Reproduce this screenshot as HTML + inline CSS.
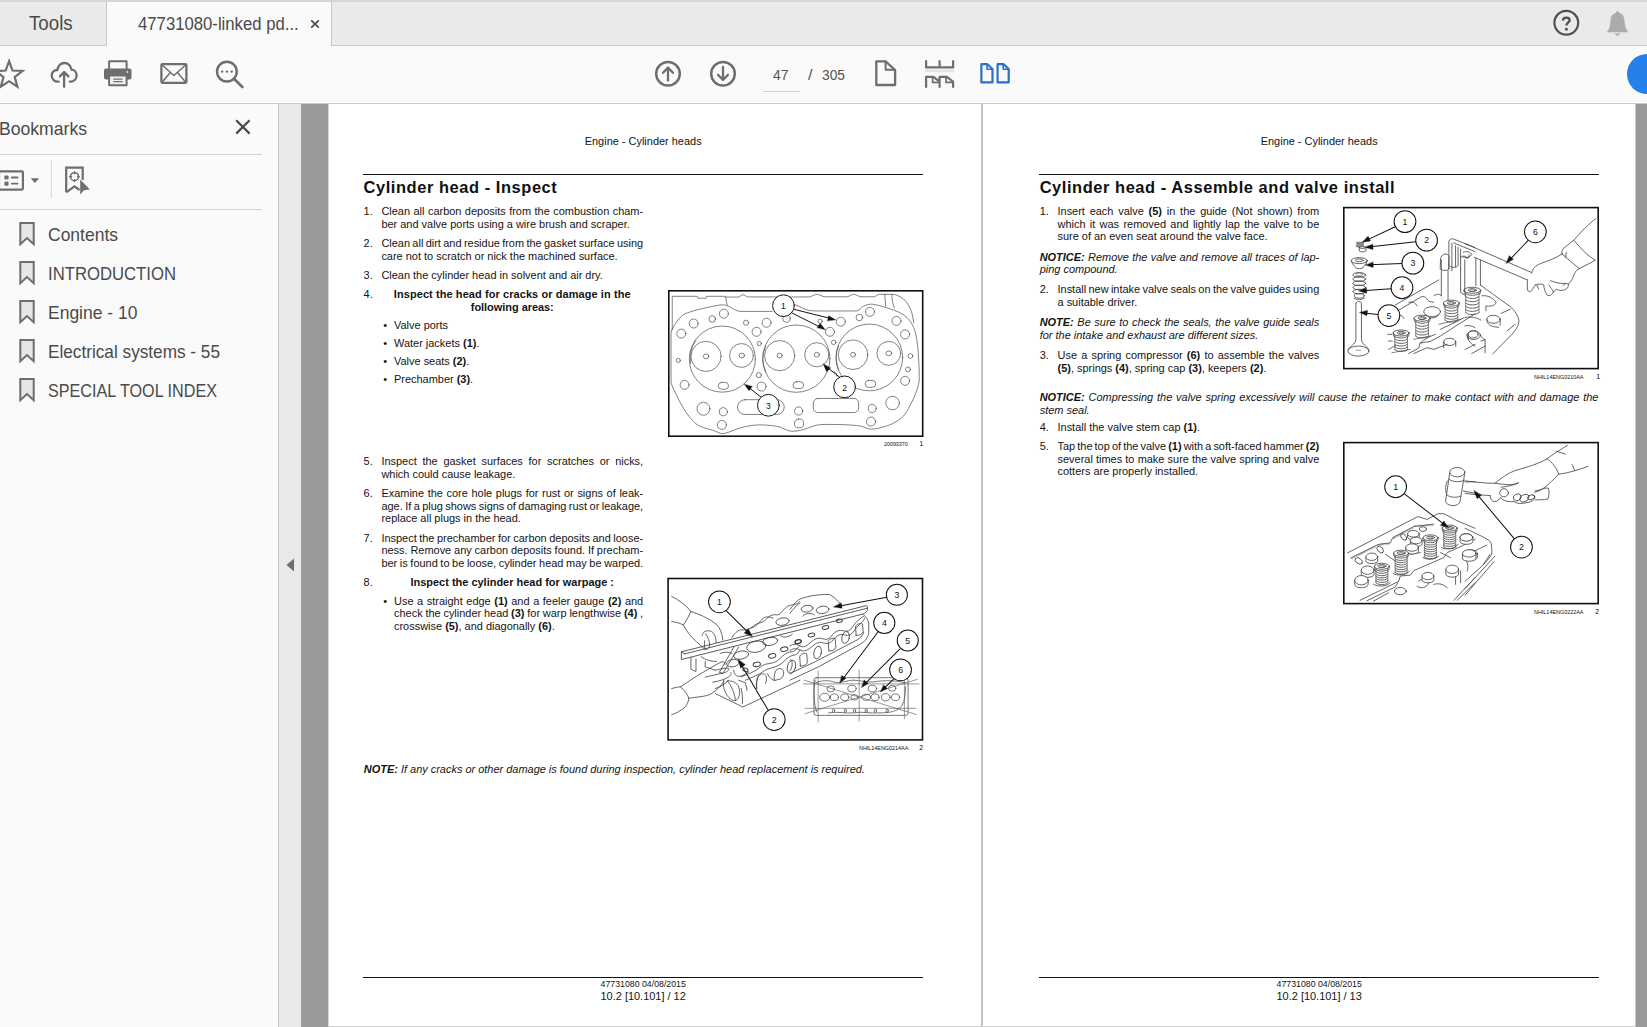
<!DOCTYPE html>
<html>
<head>
<meta charset="utf-8">
<title>47731080-linked pdf</title>
<style>
*{box-sizing:border-box;margin:0;padding:0}
html,body{width:1647px;height:1027px;overflow:hidden;background:#fafafa;font-family:"Liberation Sans",sans-serif;}
.abs{position:absolute}
#tabbar{position:absolute;left:0;top:0;width:1647px;height:46px;background:#eaeaea;border-top:2px solid #d6d6d6;border-bottom:1px solid #c8c8c8}
#tab1{position:absolute;left:0;top:0;width:107px;height:43px;border-right:1px solid #c8c8c8}
#tab2{position:absolute;left:107px;top:0;width:225px;height:44px;background:#fafafa;border-right:1px solid #c8c8c8}
.ui{position:absolute;color:#4a4a4a;white-space:nowrap;transform-origin:0 0}
#toolbar{position:absolute;left:0;top:46px;width:1647px;height:58px;background:#fafafa;border-bottom:1px solid #cbcbcb}
#left{position:absolute;left:0;top:104px;width:279px;height:923px;background:#fafafa;border-right:1px solid #c6c6c6}
#strip{position:absolute;left:279px;top:104px;width:22px;height:923px;background:#e9e9e9}
#dark{position:absolute;left:301px;top:104px;width:1346px;height:923px;background:#999999}
#pg1{position:absolute;left:328px;top:104px;width:653px;height:922px;background:#fff;border-left:1px solid #d4d4d4}
#div{position:absolute;left:981px;top:104px;width:2px;height:923px;background:#c3c3c3}
#pg2{position:absolute;left:983px;top:104px;width:653px;height:922px;background:#fff;border-right:1px solid #c6c6c6}
#bot{position:absolute;left:328px;top:1026px;width:1308px;height:1px;background:#cfcfcf}
.t{position:absolute;white-space:nowrap;font-size:10.96px;line-height:13px;color:#141414;height:13px}
.b{font-weight:bold}
.i{font-style:italic}
.h{position:absolute;white-space:nowrap;font-weight:bold;font-size:16.44px;line-height:20px;letter-spacing:.56px;color:#111}
.rule{position:absolute;height:1px;background:#111}
.fig{position:absolute;border:1.6px solid #111;background:#fff;overflow:hidden}
.fig svg{position:absolute;left:-1.6px;top:-1.6px}
.cap{position:absolute;color:#111;white-space:nowrap;line-height:8px}
</style>
</head>
<body>
<div id="tabbar">
  <div id="tab1"></div>
  <div id="tab2"></div>
</div>
<div id="toolbar"></div>
<div id="left"></div>
<div id="strip"></div>
<div id="dark"></div>
<div id="pg1"></div>
<div id="div"></div>
<div id="pg2"></div>
<div id="bot"></div>
<div class="ui" style="left:28.80px;top:10.64px;font-size:19.5px;line-height:25px;color:#4a4a4a;transform:scaleX(0.9600);">Tools</div>
<div class="ui" style="left:137.80px;top:11.69px;font-size:18.5px;line-height:24px;color:#4a4a4a;transform:scaleX(0.9031);">47731080-linked pd...</div>
<svg class="abs" style="left:309px;top:17.5px" width="12" height="12" viewBox="0 0 12 12"><path d="M2.2 2.4L9.8 9.6M9.8 2.4L2.2 9.6" stroke="#4a4a4a" stroke-width="1.7" fill="none"/></svg>
<svg class="abs" style="left:0;top:46px" width="1647" height="57" viewBox="0 46 1647 57" fill="none" stroke="#6e6e6e" stroke-width="2.3" stroke-linejoin="round" stroke-linecap="round">
<!-- star -->
<path stroke-linejoin="miter" stroke-width="2.2" d="M9.1 61.2L12.55 70.55L22.5 70.95L14.7 77.1L17.4 86.7L9.1 81.2L0.8 86.7L3.5 77.1L-4.3 70.95L5.65 70.55Z"/>
<!-- cloud upload -->
<path d="M58.6 81.6C54.6 81.9 51.7 79.2 51.7 75.6C51.7 72.2 54.4 69.8 57.4 70C58 65.8 60.9 63 64.4 63C67.9 63 70.8 65.6 71.5 69.6C74.6 69.7 76.6 72.3 76.6 75.5C76.6 79 73.8 81.9 69.8 81.6"/>
<path d="M64.1 86.8V72.2M59.9 76.4L64.1 72.1L68.4 76.4"/>
<!-- printer -->
<path stroke-width="2" d="M109.1 68.6V61.3H126.6V68.6"/>
<rect x="104" y="68.4" width="27.5" height="11" rx="2" fill="#6e6e6e" stroke="none"/>
<rect x="109.1" y="75.4" width="17.5" height="9.9" fill="#f0f0f0" stroke-width="2"/>
<path stroke-width="1.2" stroke-linecap="butt" d="M113.3 79.2H122.6M113.3 81.7H122.6"/>
<circle cx="127.3" cy="72" r="0.9" fill="#e0e0e0" stroke="none"/>
<!-- mail -->
<rect x="161.4" y="64.2" width="25" height="18.6" rx="1" stroke-width="2.3"/>
<path stroke-width="1.5" d="M162.5 65.3L173.9 75.5L185.3 65.3M162.5 81.8L170.3 72.5M185.3 81.8L177.5 72.5"/>
<!-- search -->
<circle cx="226.9" cy="71.6" r="9.9" stroke-width="2.4"/>
<path stroke-width="2.6" d="M234.2 79L242.4 87"/>
<circle cx="222.1" cy="71.6" r="1.2" fill="#6e6e6e" stroke="none"/><circle cx="226.9" cy="71.6" r="1.2" fill="#6e6e6e" stroke="none"/><circle cx="231.7" cy="71.6" r="1.2" fill="#6e6e6e" stroke="none"/>
<!-- up / down -->
<circle cx="668" cy="73.8" r="11.8" stroke-width="2.5"/>
<path stroke-width="2.3" d="M668 80.6V67.8M663 72.8L668 67.6L673 72.8"/>
<circle cx="723" cy="73.8" r="11.8" stroke-width="2.5"/>
<path stroke-width="2.3" d="M723 67V79.8M718 74.8L723 80L728 74.8"/>
<!-- page -->
<path stroke-width="2.3" d="M876.3 61.4H885.6L895.1 70V85H876.3Z"/>
<path stroke-width="2" d="M885.6 61.6V69.8H894.8"/>
<!-- fit -->
<g stroke-width="2.2" stroke-linecap="butt" stroke-linejoin="round">
<rect x="925" y="69.6" width="29.2" height="2.6" fill="#e4e4e4" stroke="none"/>
<path d="M926.1 60.3V67.4H939.6V60.3M939.6 67.4H953.1V60.3"/>
<path d="M926.1 87.8V76.8H933.4L939.6 81.6V87.8M939.6 81.6V76.8H946.9L953.1 81.6V87.8"/>
<path stroke-width="1.7" d="M932.6 77V82.4H939.2M946.1 77V82.4H952.7"/>
</g>
<!-- two page -->
<g stroke="#2a6fc9" stroke-width="2.2">
<path d="M981.4 64.2H987.4L992.5 69V82.4H981.4Z"/><path stroke-width="1.6" d="M987 64.4V69.3H992.2"/>
<path d="M997.6 64.2H1003.6L1008.7 69V82.4H997.6Z"/><path stroke-width="1.6" d="M1003.2 64.4V69.3H1008.4"/>
</g>
</svg>
<!-- blue circle -->
<div class="abs" style="left:1627px;top:54px;width:40px;height:40px;border-radius:20px;background:#2680eb"></div>
<!-- help + bell -->
<svg class="abs" style="left:1540px;top:2px" width="107" height="42" viewBox="1540 2 107 42">
<circle cx="1566.3" cy="22.8" r="11.9" fill="none" stroke="#505050" stroke-width="2.2"/>
<path d="M1562.9 20.6C1563 18.6 1564.4 17.6 1566.3 17.6C1568.3 17.6 1569.7 18.7 1569.7 20.3C1569.7 22.4 1566.4 22.7 1566.4 25.6" fill="none" stroke="#505050" stroke-width="2.3"/>
<circle cx="1566.4" cy="29.2" r="1.45" fill="#505050"/>
<path d="M1617.5 11.2C1618.6 11.2 1619.3 12 1619.2 13C1622.8 13.9 1624.3 17 1624.5 20.5C1624.8 25.6 1625.6 29.2 1628.2 32.2H1606.8C1609.4 29.2 1610.2 25.6 1610.5 20.5C1610.7 17 1612.2 13.9 1615.8 13C1615.7 12 1616.4 11.2 1617.5 11.2Z" fill="#ababab"/>
<path d="M1614.3 33.6H1620.7L1617.5 36.2Z" fill="#ababab"/>
</svg>
<!-- bookmark pane tools -->
<svg class="abs" style="left:0;top:158px" width="100" height="44" viewBox="0 158 100 44" fill="none" stroke="#6e6e6e" stroke-width="2.2" stroke-linejoin="round">
<rect x="-1" y="171.3" width="23.9" height="18.3" rx="1"/>
<rect x="4.4" y="175.4" width="4.2" height="4.2" rx="1" fill="#6e6e6e" stroke="none"/><rect x="4.4" y="181.6" width="4.2" height="4.2" rx="1" fill="#6e6e6e" stroke="none"/>
<path stroke-width="1.8" stroke-linecap="round" d="M11.8 177.5H17.6M11.8 183.7H17.6"/>
<path d="M30.7 178.2H39.1L34.9 182.9Z" fill="#6e6e6e" stroke="none"/>
<path d="M51.3 160.5V198" stroke="#d4d4d4" stroke-width="1"/>
<path stroke-linejoin="miter" d="M66.2 192V167.6H82.7V180"/>
<path stroke-linejoin="miter" d="M66.2 192.3L74.5 186.3L79.6 190"/>
<circle cx="74.5" cy="176.7" r="4" stroke-width="1.5"/>
<path stroke-width="1.2" d="M74.5 171.3V174.3M74.5 179.1V182.1M69.1 176.7H72.1M76.9 176.7H79.9"/>
<path d="M80.2 179.5L89.9 189.4L84 190.2L80.2 194.6Z" fill="#6e6e6e" stroke="none"/>
</svg>

<div class="ui" style="left:773.00px;top:64.63px;font-size:15.5px;line-height:20px;color:#555;transform:scaleX(0.8932);">47</div>
<div class="ui" style="left:807.50px;top:64.63px;font-size:15.5px;line-height:20px;color:#555;transform:scaleX(1.0450);">/</div>
<div class="ui" style="left:821.50px;top:64.63px;font-size:15.5px;line-height:20px;color:#555;transform:scaleX(0.8894);">305</div>
<div class="abs" style="left:763px;top:91px;width:37px;height:1px;background:#d0d0d0"></div>
<div class="ui" style="left:-1.00px;top:116.79px;font-size:18.5px;line-height:24px;color:#4a4a4a;transform:scaleX(0.9511);">Bookmarks</div>
<svg class="abs" style="left:233px;top:117px" width="20" height="20" viewBox="0 0 20 20"><path d="M3.2 3.2L16.6 16.6M16.6 3.2L3.2 16.6" stroke="#4a4a4a" stroke-width="2.2" fill="none"/></svg>
<div class="abs" style="left:0;top:154px;width:262px;height:1px;background:#d3d3d3"></div>
<div class="abs" style="left:0;top:209px;width:262px;height:1px;background:#d3d3d3"></div>
<div class="ui" style="left:48.30px;top:222.79px;font-size:18.5px;line-height:24px;color:#4a4a4a;transform:scaleX(0.9454);">Contents</div>
<svg class="abs" style="left:18px;top:220.7px" width="18" height="26" viewBox="0 0 18 26"><path d="M2.3 2h13.4v21.3l-6.7-6.2-6.7 6.2z" fill="#e6e6e6" stroke="#6e6e6e" stroke-width="2" stroke-linejoin="miter"/></svg>
<div class="ui" style="left:48.30px;top:262.19px;font-size:18.5px;line-height:24px;color:#4a4a4a;transform:scaleX(0.9025);">INTRODUCTION</div>
<svg class="abs" style="left:18px;top:260.1px" width="18" height="26" viewBox="0 0 18 26"><path d="M2.3 2h13.4v21.3l-6.7-6.2-6.7 6.2z" fill="#e6e6e6" stroke="#6e6e6e" stroke-width="2" stroke-linejoin="miter"/></svg>
<div class="ui" style="left:48.30px;top:301.29px;font-size:18.5px;line-height:24px;color:#4a4a4a;transform:scaleX(0.9448);">Engine - 10</div>
<svg class="abs" style="left:18px;top:299.2px" width="18" height="26" viewBox="0 0 18 26"><path d="M2.3 2h13.4v21.3l-6.7-6.2-6.7 6.2z" fill="#e6e6e6" stroke="#6e6e6e" stroke-width="2" stroke-linejoin="miter"/></svg>
<div class="ui" style="left:48.30px;top:340.29px;font-size:18.5px;line-height:24px;color:#4a4a4a;transform:scaleX(0.9295);">Electrical systems - 55</div>
<svg class="abs" style="left:18px;top:338.2px" width="18" height="26" viewBox="0 0 18 26"><path d="M2.3 2h13.4v21.3l-6.7-6.2-6.7 6.2z" fill="#e6e6e6" stroke="#6e6e6e" stroke-width="2" stroke-linejoin="miter"/></svg>
<div class="ui" style="left:48.30px;top:378.59px;font-size:18.5px;line-height:24px;color:#4a4a4a;transform:scaleX(0.8743);">SPECIAL TOOL INDEX</div>
<svg class="abs" style="left:18px;top:376.5px" width="18" height="26" viewBox="0 0 18 26"><path d="M2.3 2h13.4v21.3l-6.7-6.2-6.7 6.2z" fill="#e6e6e6" stroke="#6e6e6e" stroke-width="2" stroke-linejoin="miter"/></svg>
<svg class="abs" style="left:285px;top:557px" width="12" height="16" viewBox="0 0 12 16"><path d="M1.5 8L9 1.5V14.5z" fill="#6e6e6e"/></svg>
<div class="t" style="left:584.71px;top:135.00px;">Engine - Cylinder heads</div>
<div class="rule" style="left:363px;top:174px;width:560px"></div>
<div class="h" style="left:363.6px;top:176.70px">Cylinder head - Inspect</div>
<div class="t" style="left:363.60px;top:205.00px;">1.</div>
<div class="t" style="left:381.40px;top:205.00px;word-spacing:0.428px;">Clean all carbon deposits from the combustion cham-</div>
<div class="t" style="left:381.40px;top:218.00px;">ber and valve ports using a wire brush and scraper.</div>
<div class="t" style="left:363.60px;top:237.00px;">2.</div>
<div class="t" style="left:381.40px;top:237.00px;word-spacing:-0.684px;">Clean all dirt and residue from the gasket surface using</div>
<div class="t" style="left:381.40px;top:250.00px;">care not to scratch or nick the machined surface.</div>
<div class="t" style="left:363.60px;top:269.00px;">3.</div>
<div class="t" style="left:381.40px;top:269.00px;">Clean the cylinder head in solvent and air dry.</div>
<div class="t" style="left:363.60px;top:288.00px;">4.</div>
<div class="t" style="left:393.80px;top:288.00px;letter-spacing:0.099px;"><b>Inspect the head for cracks or damage in the</b></div>
<div class="t" style="left:470.80px;top:301.00px;letter-spacing:-0.027px;"><b>following areas:</b></div>
<div class="t" style="left:383.20px;top:319.00px;">•</div>
<div class="t" style="left:394.00px;top:319.00px;">Valve ports</div>
<div class="t" style="left:383.20px;top:337.00px;">•</div>
<div class="t" style="left:394.00px;top:337.00px;">Water jackets <b>(1)</b>.</div>
<div class="t" style="left:383.20px;top:355.00px;">•</div>
<div class="t" style="left:394.00px;top:355.00px;">Valve seats <b>(2)</b>.</div>
<div class="t" style="left:383.20px;top:373.00px;">•</div>
<div class="t" style="left:394.00px;top:373.00px;">Prechamber <b>(3)</b>.</div>
<div class="t" style="left:363.60px;top:455.00px;">5.</div>
<div class="t" style="left:381.40px;top:455.00px;word-spacing:2.693px;">Inspect the gasket surfaces for scratches or nicks,</div>
<div class="t" style="left:381.40px;top:468.00px;">which could cause leakage.</div>
<div class="t" style="left:363.60px;top:487.00px;">6.</div>
<div class="t" style="left:381.40px;top:487.00px;word-spacing:0.604px;">Examine the core hole plugs for rust or signs of leak-</div>
<div class="t" style="left:381.40px;top:500.00px;word-spacing:-0.617px;">age. If a plug shows signs of damaging rust or leakage,</div>
<div class="t" style="left:381.40px;top:512.00px;">replace all plugs in the head.</div>
<div class="t" style="left:363.60px;top:532.00px;">7.</div>
<div class="t" style="left:381.40px;top:532.00px;word-spacing:-0.533px;">Inspect the prechamber for carbon deposits and loose-</div>
<div class="t" style="left:381.40px;top:544.00px;word-spacing:-0.183px;">ness. Remove any carbon deposits found. If precham-</div>
<div class="t" style="left:381.40px;top:557.00px;word-spacing:-0.435px;">ber is found to be loose, cylinder head may be warped.</div>
<div class="t" style="left:363.60px;top:576.00px;">8.</div>
<div class="t" style="left:410.45px;top:576.00px;letter-spacing:0.007px;"><b>Inspect the cylinder head for warpage :</b></div>
<div class="t" style="left:383.20px;top:595.00px;">•</div>
<div class="t" style="left:394.00px;top:595.00px;word-spacing:0.559px;">Use a straight edge <b>(1)</b> and a feeler gauge <b>(2)</b> and</div>
<div class="t" style="left:394.00px;top:607.00px;word-spacing:-0.254px;">check the cylinder head <b>(3)</b> for warp lengthwise <b>(4)</b> ,</div>
<div class="t" style="left:394.00px;top:620.00px;">crosswise <b>(5)</b>, and diagonally <b>(6)</b>.</div>
<div class="t" style="left:363.80px;top:763.00px;"><b><i>NOTE:</i></b><i> If any cracks or other damage is found during inspection, cylinder head replacement is required.</i></div>
<div class="rule" style="left:363px;top:977px;width:560px"></div>
<div class="t" style="left:600.53px;top:978.00px;font-size:8.77px;">47731080 04/08/2015</div>
<div class="t" style="left:600.54px;top:990.00px;">10.2 [10.101] / 12</div>
<svg class="abs" style="left:666px;top:288px" width="261" height="153"><rect x="2.80" y="2.80" width="253.90" height="145.40" fill="#fff" stroke="#111" stroke-width="1.6"/></svg><svg class="abs" style="left:665px;top:285px" width="260" height="155" viewBox="0 0 260 155">
<g transform="scale(0.15092)" fill="none" stroke="#404040" stroke-width="4.3" stroke-linecap="round" stroke-linejoin="round">
<!-- casting outline -->
<path d="M48 292V75H213L218 88H272L275 75H400L412 132"/>
<path d="M403 80H488C500 74 506 65 516 65C528 65 536 76 548 79H958C972 74 996 62 1008 62C1022 62 1046 78 1058 78H1208C1222 74 1238 62 1250 62C1264 62 1286 78 1298 78H1388C1400 74 1410 62 1420 62H1518C1540 66 1562 80 1580 92C1610 118 1630 160 1640 200L1648 250"/>
<path d="M1456 62L1462 140M1503 62C1503 100 1510 130 1520 152"/>
<!-- gasket outline -->
<path d="M48 292C70 250 95 215 125 195C170 172 260 152 350 135C375 130 400 130 420 140C450 155 470 172 495 175H710M860 130C890 140 920 160 950 168C990 174 1040 172 1270 172C1290 168 1300 150 1315 140C1340 128 1360 125 1380 128C1420 135 1470 150 1520 168C1560 182 1600 205 1625 240C1660 290 1672 360 1678 450C1684 540 1686 600 1684 640C1672 700 1650 750 1625 795C1610 830 1590 860 1565 882C1530 910 1490 930 1450 940C1420 948 1390 955 1368 955C1340 955 1320 940 1298 935C1250 925 1100 922 1030 925C990 928 960 945 925 955C890 965 860 972 830 968C800 962 780 945 750 938C700 928 640 925 600 928C550 932 500 945 460 960C430 972 400 985 385 985C360 985 340 970 315 962C270 950 235 940 212 925C180 900 150 860 130 830C105 790 80 740 62 700C50 675 42 660 40 640V320C40 310 44 300 48 292"/>
<!-- cylinders -->
<circle cx="380" cy="491" r="219"/><path d="M205 365A212 212 0 0 0 170 520" stroke-width="4"/>
<circle cx="870" cy="488" r="223"/><path d="M668 400A213 213 0 0 0 668 576" stroke-width="4"/>
<circle cx="1354" cy="480" r="221"/><path d="M1150 400A213 213 0 0 0 1150 560" stroke-width="4"/>
<!-- valves -->
<circle cx="272" cy="473" r="100"/><circle cx="507" cy="467" r="79"/>
<ellipse cx="272" cy="473" rx="18" ry="16"/><ellipse cx="509" cy="467" rx="18" ry="16"/>
<circle cx="760" cy="468" r="100"/><circle cx="1006" cy="462" r="80"/>
<ellipse cx="760" cy="468" rx="17" ry="16"/><ellipse cx="1006" cy="462" rx="17" ry="16"/>
<circle cx="1246" cy="462" r="98"/><circle cx="1483" cy="453" r="79"/>
<ellipse cx="1246" cy="462" rx="16" ry="16"/><ellipse cx="1483" cy="453" rx="19" ry="16"/>
<!-- ovals -->
<rect x="353" y="645" width="68" height="46" rx="23"/>
<rect x="848" y="641" width="70" height="45" rx="22"/>
<rect x="1326" y="632" width="70" height="46" rx="23"/>
<!-- slots -->
<rect x="480" y="760" width="310" height="98" rx="49"/>
<rect x="983" y="752" width="300" height="93" rx="30"/>
<rect x="858" y="888" width="60" height="58" rx="27"/>
<!-- holes -->
<g>
<circle cx="390" cy="190" r="30"/><circle cx="313" cy="225" r="22"/><circle cx="190" cy="255" r="30"/><circle cx="108" cy="322" r="30"/>
<circle cx="537" cy="250" r="17"/><circle cx="673" cy="250" r="30"/><circle cx="607" cy="310" r="30"/><circle cx="625" cy="388" r="14"/>
<circle cx="88" cy="500" r="14"/><circle cx="622" cy="597" r="17"/><circle cx="640" cy="673" r="30"/><circle cx="130" cy="662" r="30"/>
<circle cx="255" cy="820" r="43"/><circle cx="387" cy="840" r="27"/><circle cx="377" cy="927" r="30"/>
<circle cx="805" cy="222" r="25"/><circle cx="1028" cy="240" r="14"/>
<circle cx="1165" cy="243" r="30"/><circle cx="1093" cy="310" r="30"/><circle cx="1118" cy="380" r="15"/>
<circle cx="1288" cy="215" r="22"/><circle cx="1358" cy="178" r="30"/><circle cx="1534" cy="238" r="30"/><circle cx="1591" cy="327" r="30"/>
<circle cx="1626" cy="470" r="16"/><circle cx="1610" cy="560" r="16"/><circle cx="1591" cy="635" r="30"/><circle cx="1508" cy="782" r="45"/>
<circle cx="1373" cy="818" r="27"/><circle cx="1365" cy="905" r="30"/><circle cx="886" cy="835" r="27"/>
<path d="M1120 575C1135 580 1140 590 1138 605"/>
</g>
<!-- callouts -->
<g stroke="#111" stroke-width="6.5">
<path d="M850 160L1110 225M840 185L1040 285M1175 625L1062 535M640 745L540 668"/>
<g fill="#111" stroke-width="2"><path d="M1130 230L1083 203L1077 237Z"/><path d="M1062 296L1028 253L1008 282Z"/><path d="M1048 523L1071 575L1097 550Z"/><path d="M525 657L557 701L578 673Z"/></g>
<circle cx="785" cy="137" r="72" fill="#fff"/><circle cx="1190" cy="675" r="72" fill="#fff"/><circle cx="685" cy="797" r="72" fill="#fff"/>
</g>
<g fill="#111" stroke="none" font-family="Liberation Sans, sans-serif" font-size="56" text-anchor="middle"><text x="785" y="162">1</text><text x="1190" y="700">2</text><text x="685" y="822">3</text></g>
</g>
</svg>

<div class="cap" style="left:884.2px;top:439.7px;font-size:5.2px;transform-origin:0 0;transform:scaleX(1.029)">20093370</div>
<div class="cap" style="left:919.6px;top:440.09999999999997px;font-size:6.8px;color:#000">1</div>
<svg class="abs" style="left:665px;top:575px" width="262" height="169"><rect x="3.10" y="3.50" width="254.40" height="161.40" fill="#fff" stroke="#111" stroke-width="1.6"/></svg><svg class="abs" style="left:665px;top:573px" width="260" height="172" viewBox="665 573 260 172">
<g fill="none" stroke="#404040" stroke-width="4.8" stroke-linecap="round" stroke-linejoin="round">
<g transform="translate(665,573) scale(0.1675)">
<!-- upper hand -->
<path d="M40 140C80 160 125 190 155 230C140 260 125 290 110 310C90 300 65 292 40 290"/>
<path d="M155 230C200 245 260 268 305 305C330 330 342 360 345 400"/>
<path d="M110 310C125 345 165 395 205 425C220 440 232 452 240 458"/>
<path d="M222 372C222 352 245 342 270 346C292 352 305 380 305 415"/>
<path d="M243 362C258 385 268 410 266 435C262 452 248 462 238 452C232 440 238 425 236 405"/>
<!-- lower hand -->
<path d="M40 690C60 684 78 680 92 680C115 700 135 722 142 748C140 770 130 790 118 802C95 822 65 838 40 846"/>
<path d="M92 680C130 655 180 620 215 600C250 580 300 548 335 532C350 526 362 534 358 546"/>
<path d="M142 748C190 740 245 738 275 722C310 700 335 672 352 648"/>
<path d="M240 622C275 612 320 604 352 596C372 590 385 580 380 570C370 565 340 572 300 580"/>
<path d="M285 652C320 646 355 636 378 622C392 612 400 600 392 594"/>
<path d="M300 690C330 680 360 662 380 640"/>
<!-- feeler gauge -->
<path d="M412 440L325 592M440 442L345 600L325 592"/>
<!-- head end face -->
<path d="M155 505V575L185 588V515M240 528V560L300 580"/>
<path d="M300 720L465 800L806 640"/>
<path d="M350 640C340 690 370 750 410 762C440 765 455 720 440 680C430 655 400 640 372 645"/>
<path d="M372 645C395 670 418 720 420 760"/>
<path d="M455 690C462 720 465 760 462 780M440 640L480 655L490 700"/>
<path d="M410 580C412 600 420 615 440 618C470 615 480 600 500 590"/>
<path d="M215 500C240 520 280 530 310 528M330 480C350 470 380 470 400 480"/>
<!-- top surface holes -->
<ellipse cx="545" cy="440" rx="58" ry="33" transform="rotate(-10 545 440)"/>
<ellipse cx="628" cy="408" rx="45" ry="24" transform="rotate(-10 628 408)"/>
<ellipse cx="455" cy="490" rx="45" ry="24" transform="rotate(-10 455 490)"/>
<ellipse cx="405" cy="538" rx="38" ry="22" transform="rotate(-10 405 538)"/>
<ellipse cx="548" cy="545" rx="22" ry="13" transform="rotate(-12 548 545)" stroke-width="6"/>
<ellipse cx="640" cy="495" rx="22" ry="13" transform="rotate(-12 640 495)" stroke-width="6"/>
<ellipse cx="712" cy="455" rx="22" ry="13" transform="rotate(-12 712 455)" stroke-width="6"/>
<ellipse cx="795" cy="410" rx="20" ry="12" transform="rotate(-12 795 410)" stroke-width="6"/>
<ellipse cx="702" cy="290" rx="40" ry="22" transform="rotate(-10 702 290)"/>
<path d="M690 375C705 388 740 385 760 365"/>
<ellipse cx="480" cy="578" rx="16" ry="10" transform="rotate(20 480 578)" stroke-width="6"/>
<!-- back wavy edge -->
<path d="M400 385C420 350 445 335 470 340C500 345 520 320 545 305C565 295 580 300 600 280C620 258 640 245 665 250C690 255 705 215 730 200C760 185 780 195 806 170"/>
<path d="M510 330C540 325 560 300 580 275C600 255 625 262 645 270"/>
<!-- front wavy edge -->
<path d="M455 620C500 600 540 590 570 560C600 535 640 545 670 525C700 500 720 470 760 470C780 468 795 440 806 430"/>
<path d="M480 640C520 622 560 610 590 585C620 565 650 570 690 545C720 520 740 492 775 490C790 488 800 470 806 460"/>
<!-- side ports -->
<path d="M548 690C545 660 548 630 560 612C580 595 600 600 605 620C608 640 602 655 600 660"/>
<path d="M652 640C650 615 655 590 665 578C685 565 705 570 708 590C710 610 704 625 690 632Z"/>
<ellipse cx="755" cy="560" rx="24" ry="40" transform="rotate(15 755 560)"/>
<path d="M560 612C540 640 545 675 548 690M610 600C630 630 640 640 652 640"/>
<!-- straight edge -->
<path d="M100 470L1201 195L1208 201V224L1190 243L100 516ZM116 483L1208 210M100 470L116 483" stroke="#333"/>
</g>
<g transform="translate(790,573) scale(0.1675)">
<!-- back casting -->
<path d="M0 218C20 190 40 160 75 150C110 140 150 128 235 128C260 140 280 160 310 195"/>
<path d="M0 240C20 215 40 190 60 180"/>
<ellipse cx="102" cy="213" rx="35" ry="20" transform="rotate(-8 102 213)"/>
<ellipse cx="195" cy="220" rx="38" ry="22" transform="rotate(-8 195 220)"/>
<path d="M75 258C85 240 130 235 145 250"/>
<!-- bar -->

<!-- small holes -->
<ellipse cx="295" cy="285" rx="18" ry="10" transform="rotate(-12 295 285)" stroke-width="6"/>
<ellipse cx="212" cy="325" rx="20" ry="11" transform="rotate(-12 212 325)" stroke-width="6"/>
<ellipse cx="128" cy="370" rx="20" ry="11" transform="rotate(-12 128 370)" stroke-width="6"/>
<ellipse cx="48" cy="410" rx="18" ry="10" transform="rotate(-12 48 410)" stroke-width="6"/>
<!-- wavy edges -->
<path d="M0 435C20 420 45 425 70 440C100 445 120 410 150 395C180 380 200 400 225 395C250 385 255 355 285 345C310 335 330 355 350 345C375 330 380 300 410 280C425 268 435 262 440 258"/>
<path d="M0 462C25 445 50 452 75 465C105 470 130 435 158 420C185 405 205 425 232 420C258 410 262 380 292 370C318 360 338 380 358 370C384 355 390 325 418 305C432 292 440 285 445 270"/>
<!-- ports -->
<path d="M62 555L58 500C60 485 85 475 100 482L104 535C100 548 78 558 62 555Z"/>
<ellipse cx="165" cy="475" rx="22" ry="38" transform="rotate(12 165 475)"/>
<path d="M232 465L228 410C230 395 255 385 270 392L274 445C270 458 248 468 232 465Z"/>
<ellipse cx="332" cy="385" rx="22" ry="36" transform="rotate(12 332 385)"/>
<path d="M395 372L391 322C393 307 418 297 433 304L437 352C433 365 411 375 395 372Z"/>
<path d="M0 520C15 505 20 560 0 585"/>
<!-- lower outline -->
<path d="M0 640L170 560L420 425C445 410 465 390 470 360V300C465 280 455 262 440 250"/>
<path d="M0 600L150 530L400 400C420 388 435 375 440 355"/>
<!-- small diagram -->
<g stroke-width="4.2">
<rect x="143" y="625" width="562" height="225" rx="14"/>
<path d="M155 655C190 640 230 640 260 650C300 662 340 640 380 640C420 640 450 655 500 650C560 640 620 640 690 655"/>
<path d="M150 640C140 700 140 780 160 830"/>
<ellipse cx="243" cy="692" rx="22" ry="18"/><ellipse cx="370" cy="690" rx="25" ry="20"/><ellipse cx="492" cy="690" rx="25" ry="20"/><ellipse cx="610" cy="688" rx="22" ry="18"/>
<ellipse cx="207" cy="742" rx="30" ry="24"/><ellipse cx="265" cy="742" rx="24" ry="20"/><ellipse cx="327" cy="742" rx="24" ry="20"/><ellipse cx="385" cy="742" rx="22" ry="16"/><ellipse cx="455" cy="742" rx="26" ry="18"/><ellipse cx="508" cy="742" rx="24" ry="20"/><ellipse cx="572" cy="742" rx="26" ry="22"/><ellipse cx="630" cy="742" rx="24" ry="20"/>
<ellipse cx="260" cy="822" rx="7" ry="10"/><ellipse cx="330" cy="822" rx="7" ry="10"/><ellipse cx="385" cy="822" rx="7" ry="10"/><ellipse cx="455" cy="822" rx="7" ry="10"/><ellipse cx="510" cy="822" rx="7" ry="10"/><ellipse cx="580" cy="822" rx="7" ry="10"/>
<path d="M230 835C280 825 330 840 380 835C430 825 480 840 530 835C590 835 640 830 670 790C685 760 690 720 690 680"/>
<path d="M80 662H770M90 808H750M168 585V890M413 580V885M683 640V870M85 640L755 845M90 840L760 635" stroke="#555" stroke-width="3.6"/>
</g>
</g>
<!-- callouts -->
<g stroke="#111" stroke-width="6">
<g transform="translate(665,573) scale(0.1675)">
<path d="M365 225L510 368M615 818L445 530"/>
<path d="M522 380L497 332L473 358Z" fill="#111" stroke-width="2"/><path d="M437 516L451 568L479 548Z" fill="#111" stroke-width="2"/>
<circle cx="325" cy="172" r="65" fill="#fff"/><circle cx="652" cy="875" r="65" fill="#fff"/>
</g>
<g transform="translate(790,573) scale(0.1675)">
<path d="M578 145L280 200M525 352L310 640M655 455L440 670M620 632L555 695"/>
<g fill="#111" stroke-width="2"><path d="M260 203L311 211L306 179Z"/><path d="M298 657L334 628L309 612Z"/><path d="M427 683L467 659L443 639Z"/><path d="M540 710L581 689L559 668Z"/></g>
<circle cx="638" cy="130" r="63" fill="#fff"/><circle cx="563" cy="298" r="63" fill="#fff"/><circle cx="703" cy="403" r="63" fill="#fff"/><circle cx="660" cy="578" r="65" fill="#fff"/>
</g>
</g>
<g fill="#111" stroke="none" font-family="Liberation Sans, sans-serif" font-size="52" text-anchor="middle">
<g transform="translate(665,573) scale(0.1675)"><text x="325" y="190">1</text><text x="652" y="893">2</text></g>
<g transform="translate(790,573) scale(0.1675)"><text x="638" y="148">3</text><text x="563" y="316">4</text><text x="703" y="421">5</text><text x="660" y="596">6</text></g>
</g>
</g>
</svg>

<div class="cap" style="left:858.6px;top:743.9px;font-size:5.2px;transform-origin:0 0;transform:scaleX(1.042)">NHIL14ENG0214AA</div>
<div class="cap" style="left:919.2px;top:744.3px;font-size:6.8px;color:#000">2</div>
<div class="t" style="left:1260.71px;top:135.00px;">Engine - Cylinder heads</div>
<div class="rule" style="left:1039px;top:174px;width:560px"></div>
<div class="h" style="left:1039.7px;top:176.70px">Cylinder head - Assemble and valve install</div>
<div class="t" style="left:1039.70px;top:205.00px;">1.</div>
<div class="t" style="left:1057.50px;top:205.00px;word-spacing:1.755px;">Insert each valve <b>(5)</b> in the guide (Not shown) from</div>
<div class="t" style="left:1057.50px;top:218.00px;word-spacing:1.273px;">which it was removed and lightly lap the valve to be</div>
<div class="t" style="left:1057.50px;top:230.00px;">sure of an even seat around the valve face.</div>
<div class="t" style="left:1039.70px;top:251.00px;word-spacing:0.283px;"><b><i>NOTICE:</i></b><i> Remove the valve and remove all traces of lap-</i></div>
<div class="t" style="left:1039.70px;top:263.00px;"><i>ping compound.</i></div>
<div class="t" style="left:1039.70px;top:283.00px;">2.</div>
<div class="t" style="left:1057.50px;top:283.00px;word-spacing:-0.686px;">Install new intake valve seals on the valve guides using</div>
<div class="t" style="left:1057.50px;top:296.00px;">a suitable driver.</div>
<div class="t" style="left:1039.70px;top:316.00px;word-spacing:0.557px;"><b><i>NOTE:</i></b><i> Be sure to check the seals, the valve guide seals</i></div>
<div class="t" style="left:1039.70px;top:329.00px;"><i>for the intake and exhaust are different sizes.</i></div>
<div class="t" style="left:1039.70px;top:349.00px;">3.</div>
<div class="t" style="left:1057.50px;top:349.00px;word-spacing:1.138px;">Use a spring compressor <b>(6)</b> to assemble the valves</div>
<div class="t" style="left:1057.50px;top:362.00px;"><b>(5)</b>, springs <b>(4)</b>, spring cap <b>(3)</b>, keepers <b>(2)</b>.</div>
<div class="t" style="left:1039.70px;top:391.00px;word-spacing:0.830px;"><b><i>NOTICE:</i></b><i> Compressing the valve spring excessively will cause the retainer to make contact with and damage the</i></div>
<div class="t" style="left:1039.70px;top:404.00px;"><i>stem seal.</i></div>
<div class="t" style="left:1039.70px;top:421.00px;">4.</div>
<div class="t" style="left:1057.50px;top:421.00px;">Install the valve stem cap <b>(1)</b>.</div>
<div class="t" style="left:1039.70px;top:440.00px;">5.</div>
<div class="t" style="left:1057.50px;top:440.00px;word-spacing:-0.945px;">Tap the top of the valve <b>(1)</b> with a soft-faced hammer <b>(2)</b></div>
<div class="t" style="left:1057.50px;top:453.00px;word-spacing:0.130px;">several times to make sure the valve spring and valve</div>
<div class="t" style="left:1057.50px;top:465.00px;">cotters are properly installed.</div>
<div class="rule" style="left:1039px;top:977px;width:560px"></div>
<div class="t" style="left:1276.53px;top:978.00px;font-size:8.77px;">47731080 04/08/2015</div>
<div class="t" style="left:1276.54px;top:990.00px;">10.2 [10.101] / 13</div>
<svg class="abs" style="left:1341px;top:204px" width="262" height="168"><rect x="2.80" y="3.60" width="254.40" height="161.00" fill="#fff" stroke="#111" stroke-width="1.6"/></svg><svg class="abs" style="left:1340px;top:202px" width="262" height="172" viewBox="1340 202 262 172">
<g fill="none" stroke="#404040" stroke-width="4.8" stroke-linecap="round" stroke-linejoin="round">
<g transform="translate(1340,202) scale(0.1675)">
<path d="M330 615L590 465M352 645L470 575M290 880L330 858M285 790H310M290 830H312M410 905L470 872L478 842L540 832L600 800L720 722L806 668"/>
<path d="M440 905L520 870L560 880L640 850M470 575C480 560 510 560 520 580C530 600 545 590 560 600M560 560C580 545 600 550 605 560"/>
<ellipse cx="550" cy="655" rx="50" ry="30"/><path d="M512 672C520 700 575 700 590 672"/>
<ellipse cx="655" cy="835" rx="36" ry="22"/><path d="M619 835V870M691 835V862"/>
<ellipse cx="795" cy="790" rx="30" ry="22"/><path d="M765 790V820"/>
<path d="M410 600C430 590 450 600 460 620M350 680C365 672 375 680 380 695M600 760C640 740 690 720 740 690M480 842C500 820 540 800 570 790"/>
<path d="M327 800A38 12 0 0 0 403 800"/><path d="M327 816A38 12 0 0 0 403 816"/><path d="M327 832A38 12 0 0 0 403 832"/><path d="M327 848A38 12 0 0 0 403 848"/><path d="M327 864A38 12 0 0 0 403 864"/><path d="M327 880A38 12 0 0 0 403 880"/><path d="M327 792V880M403 792V880" stroke-width="3.5"/><ellipse cx="365" cy="782" rx="48" ry="18" fill="#fff"/><path d="M318 782C318 806 327 804 327 808M412 782C412 806 403 804 403 808"/><ellipse cx="365" cy="781" rx="24" ry="9"/><ellipse cx="365" cy="783" rx="14" ry="5" stroke-width="3"/>
<path d="M452 712A38 12 0 0 0 528 712"/><path d="M452 730A38 12 0 0 0 528 730"/><path d="M452 747A38 12 0 0 0 528 747"/><path d="M452 765A38 12 0 0 0 528 765"/><path d="M452 782A38 12 0 0 0 528 782"/><path d="M452 800A38 12 0 0 0 528 800"/><path d="M452 704V800M528 704V800" stroke-width="3.5"/><ellipse cx="490" cy="694" rx="48" ry="18" fill="#fff"/><path d="M442 694C442 718 452 716 452 720M538 694C538 718 528 716 528 720"/><ellipse cx="490" cy="693" rx="24" ry="9"/><ellipse cx="490" cy="695" rx="14" ry="5" stroke-width="3"/>
<path d="M627 622A38 12 0 0 0 703 622"/><path d="M627 639A38 12 0 0 0 703 639"/><path d="M627 655A38 12 0 0 0 703 655"/><path d="M627 672A38 12 0 0 0 703 672"/><path d="M627 688A38 12 0 0 0 703 688"/><path d="M627 705A38 12 0 0 0 703 705"/><path d="M627 614V705M703 614V705" stroke-width="3.5"/><ellipse cx="665" cy="604" rx="48" ry="18" fill="#fff"/><path d="M618 604C618 628 627 626 627 630M712 604C712 628 703 626 703 630"/><ellipse cx="665" cy="603" rx="24" ry="9"/><ellipse cx="665" cy="605" rx="14" ry="5" stroke-width="3"/>
<path d="M750 545A40 12 0 0 0 830 545"/><path d="M750 564A40 12 0 0 0 830 564"/><path d="M750 583A40 12 0 0 0 830 583"/><path d="M750 602A40 12 0 0 0 830 602"/><path d="M750 622A40 12 0 0 0 830 622"/><path d="M750 641A40 12 0 0 0 830 641"/><path d="M750 660A40 12 0 0 0 830 660"/><path d="M750 537V660M830 537V660" stroke-width="3.5"/><ellipse cx="790" cy="527" rx="50" ry="18" fill="#fff"/><path d="M740 527C740 551 750 549 750 553M840 527C840 551 830 549 830 553"/><ellipse cx="790" cy="526" rx="25" ry="9"/><ellipse cx="790" cy="528" rx="15" ry="5" stroke-width="3"/>
<path d="M310 900L420 880M440 820L540 800M590 730L720 700" stroke-width="4"/>
<path d="M605 345V560M645 410V590M600 345C600 320 620 305 640 312C652 318 655 335 650 345V400C640 412 615 412 600 400Z" fill="#fff"/>
<path d="M650 400V235C655 222 668 215 680 222L806 272M668 410V245M690 262V385M705 270V380M720 282V330"/>
<path d="M720 330C735 318 755 322 758 335M720 330V540L748 558M745 345V535M758 335C770 338 775 325 770 315" stroke-width="5"/>
<path d="M680 245L806 296M660 385C675 392 690 392 700 385"/>
<rect x="100" y="240" width="40" height="28" fill="#8a8a8a" stroke="#555" stroke-width="3"/>
<path d="M115 272V292C120 300 150 300 155 292V272C150 264 120 264 115 272Z" fill="#fff"/><path d="M115 272C120 280 150 280 155 272"/>
<ellipse cx="115" cy="350" rx="48" ry="18"/><ellipse cx="115" cy="348" rx="24" ry="8"/><path d="M67 352C75 375 90 385 92 392C100 400 130 400 138 392C140 385 155 375 163 352"/>
<ellipse cx="115" cy="435" rx="38" ry="14"/>
<ellipse cx="115" cy="460" rx="38" ry="14"/>
<ellipse cx="115" cy="485" rx="38" ry="14"/>
<ellipse cx="115" cy="510" rx="38" ry="14"/>
<ellipse cx="115" cy="535" rx="38" ry="14"/>
<ellipse cx="115" cy="560" rx="30" ry="14"/>
<ellipse cx="115" cy="432" rx="22" ry="7" stroke-width="3"/><path d="M85 575C100 585 130 585 145 575" />
<path d="M95 605C95 590 128 590 128 605V820C130 850 160 860 172 880M95 605V820C93 850 60 860 48 880"/><ellipse cx="110" cy="890" rx="63" ry="30"/><path d="M95 885H125" stroke-width="3"/>
</g>
<g transform="translate(1465,202) scale(0.1675)">
<path d="M0 248L395 420M55 330L372 465M65 335V500M92 347V498"/>
<path d="M-10 300C10 290 35 300 40 315C30 330 10 335 -10 330"/>
<path d="M398 425C400 400 420 380 450 368C490 352 540 338 580 310M372 465V520C375 540 395 540 402 522L420 495M420 495C440 488 462 488 470 495C472 515 478 540 490 555C505 565 520 552 528 538L545 520C560 530 585 530 600 522C615 515 620 500 616 490C605 482 590 490 585 500M430 498L440 520M500 495C510 510 520 520 528 538M510 470C540 480 570 490 600 486M616 490C635 480 645 450 655 425C662 410 672 402 682 398"/>
<path d="M580 310C575 295 580 285 590 275L650 228C700 290 740 325 778 348L682 398C650 370 610 340 580 310M650 228C690 180 740 130 780 100M600 330L605 300"/>
<path d="M95 498C140 530 200 575 250 610C290 635 315 670 322 710C320 740 300 770 280 790L165 908M215 665L270 640M250 770L300 730M100 560C130 555 170 570 185 600C180 620 150 625 125 620V650"/>
<ellipse cx="170" cy="700" rx="40" ry="24"/><path d="M130 700C130 730 150 745 200 748M210 700V735"/>
<ellipse cx="52" cy="795" rx="40" ry="26"/><path d="M12 795C15 830 40 850 60 860M92 795C100 810 110 820 120 822"/>
<path d="M0 690C30 680 70 690 95 705M0 740C20 735 40 738 60 750M95 830L120 822V900M0 880L60 850M40 905L120 860"/>
</g>
<g stroke="#111" stroke-width="6">
<g transform="translate(1340,202) scale(0.1675)">
<path d="M330 148L150 232M452 238L170 268M370 367L175 375M305 518L135 530M228 672L140 662"/>
<g fill="#111" stroke-width="2"><path d="M133 241L182 233L168 205Z"/><path d="M148 270L197 284L196 252Z"/><path d="M152 376L198 391L198 359Z"/><path d="M112 531L160 545L158 513Z"/><path d="M117 660L161 679L164 648Z"/></g>
<circle cx="388" cy="117" r="65" fill="#fff"/>
<circle cx="517" cy="228" r="65" fill="#fff"/>
<circle cx="435" cy="365" r="65" fill="#fff"/>
<circle cx="370" cy="512" r="65" fill="#fff"/>
<circle cx="292" cy="678" r="65" fill="#fff"/>
</g><g transform="translate(1465,202) scale(0.1675)">
<path d="M378 228L262 350"/><path d="M246 367L289 342L265 321Z" fill="#111" stroke-width="2"/><circle cx="420" cy="178" r="65" fill="#fff"/>
</g></g>
<g fill="#111" stroke="none" font-family="Liberation Sans, sans-serif" font-size="52" text-anchor="middle">
<g transform="translate(1340,202) scale(0.1675)">
<text x="388" y="135">1</text>
<text x="517" y="246">2</text>
<text x="435" y="383">3</text>
<text x="370" y="530">4</text>
<text x="292" y="696">5</text>
</g><g transform="translate(1465,202) scale(0.1675)"><text x="420" y="196">6</text></g></g>
</g></svg>
<div class="cap" style="left:1534px;top:373px;font-size:5.2px;transform-origin:0 0;transform:scaleX(1.046)">NHIL14ENG0210AA</div>
<div class="cap" style="left:1596.2px;top:373.4px;font-size:6.8px;color:#000">1</div>
<svg class="abs" style="left:1341px;top:439px" width="262" height="168"><rect x="2.80" y="3.60" width="254.40" height="161.00" fill="#fff" stroke="#111" stroke-width="1.6"/></svg><svg class="abs" style="left:1340px;top:437px" width="262" height="172" viewBox="1340 437 262 172">
<g fill="none" stroke="#404040" stroke-width="4.8" stroke-linecap="round" stroke-linejoin="round">
<g transform="translate(1340,437) scale(0.1675)">
<path d="M45 692L465 475L520 492L585 458H620L700 500L806 545"/>
<path d="M65 722L215 648L235 640L300 632L315 600L440 535L560 520M120 975L350 862L360 830L420 825L440 798L620 720L640 690L720 655L806 610"/>
<path d="M160 978L330 895L345 870M200 980L290 930M680 975L806 840M700 975L806 870M690 880V780M720 870V800"/>
<path d="M70 725L210 655M225 645L298 637M318 606L438 542M445 530L555 527" stroke-width="10" stroke="#555" stroke-dasharray="2.5 4.5" stroke-linecap="butt"/>
<path d="M270 700L330 740M420 700L480 690M600 690L660 720M470 860C490 840 520 850 530 870C520 900 480 910 460 890M560 880C590 870 620 880 640 900M740 720C760 740 770 770 760 800"/>
<path d="M403 578V598C403 618 473 618 473 598V578" fill="#fff"/><ellipse cx="438" cy="578" rx="35" ry="20" fill="#fff"/>
<path d="M420 618V638C420 658 490 658 490 638V618" fill="#fff"/><ellipse cx="455" cy="618" rx="35" ry="20" fill="#fff"/>
<path d="M392 660V682C392 704 468 704 468 682V660" fill="#fff"/><ellipse cx="430" cy="660" rx="38" ry="22" fill="#fff"/>
<path d="M155 715V739C155 761 225 761 225 739V715" fill="#fff"/><ellipse cx="190" cy="715" rx="35" ry="22" fill="#fff"/>
<path d="M127 795V819C127 844 203 844 203 819V795" fill="#fff"/><ellipse cx="165" cy="795" rx="38" ry="25" fill="#fff"/>
<path d="M88 855V879C88 907 168 907 168 879V855" fill="#fff"/><ellipse cx="128" cy="855" rx="40" ry="28" fill="#fff"/>
<path d="M717 598V624C717 646 793 646 793 624V598" fill="#fff"/><ellipse cx="755" cy="598" rx="38" ry="22" fill="#fff"/>
<path d="M740 695V719C740 741 820 741 820 719V695" fill="#fff"/><ellipse cx="780" cy="695" rx="40" ry="22" fill="#fff"/>
<path d="M632 790V818C632 843 708 843 708 818V790" fill="#fff"/><ellipse cx="670" cy="790" rx="38" ry="25" fill="#fff"/>
<path d="M490 830V854C490 876 560 876 560 854V830" fill="#fff"/><ellipse cx="525" cy="830" rx="35" ry="22" fill="#fff"/>
<path d="M325 920V920C325 942 395 942 395 920V920" fill="#fff"/><ellipse cx="360" cy="920" rx="35" ry="22" fill="#fff"/>
<ellipse cx="112" cy="740" rx="24" ry="16" transform="rotate(35 112 740)"/><ellipse cx="240" cy="672" rx="24" ry="15" transform="rotate(50 240 672)"/><ellipse cx="380" cy="597" rx="22" ry="14" transform="rotate(50 380 597)"/><ellipse cx="495" cy="550" rx="22" ry="14"/>
<path d="M214 790A36 11 0 0 0 286 790"/><path d="M214 803A36 11 0 0 0 286 803"/><path d="M214 817A36 11 0 0 0 286 817"/><path d="M214 830A36 11 0 0 0 286 830"/><path d="M214 843A36 11 0 0 0 286 843"/><path d="M214 857A36 11 0 0 0 286 857"/><path d="M214 870A36 11 0 0 0 286 870"/><path d="M214 782V870M286 782V870" stroke-width="3.5"/><ellipse cx="250" cy="772" rx="45" ry="18" fill="#fff"/><path d="M205 772C205 796 214 794 214 798M295 772C295 796 286 794 286 798"/><ellipse cx="250" cy="771" rx="25" ry="9"/><ellipse cx="250" cy="773" rx="14" ry="5" stroke-width="3"/>
<path d="M329 712A36 11 0 0 0 401 712"/><path d="M329 726A36 11 0 0 0 401 726"/><path d="M329 739A36 11 0 0 0 401 739"/><path d="M329 753A36 11 0 0 0 401 753"/><path d="M329 767A36 11 0 0 0 401 767"/><path d="M329 781A36 11 0 0 0 401 781"/><path d="M329 794A36 11 0 0 0 401 794"/><path d="M329 808A36 11 0 0 0 401 808"/><path d="M329 704V808M401 704V808" stroke-width="3.5"/><ellipse cx="365" cy="694" rx="45" ry="18" fill="#fff"/><path d="M320 694C320 718 329 716 329 720M410 694C410 718 401 716 401 720"/><ellipse cx="365" cy="693" rx="25" ry="9"/><ellipse cx="365" cy="695" rx="14" ry="5" stroke-width="3"/>
<path d="M504 620A36 11 0 0 0 576 620"/><path d="M504 634A36 11 0 0 0 576 634"/><path d="M504 647A36 11 0 0 0 576 647"/><path d="M504 661A36 11 0 0 0 576 661"/><path d="M504 674A36 11 0 0 0 576 674"/><path d="M504 688A36 11 0 0 0 576 688"/><path d="M504 701A36 11 0 0 0 576 701"/><path d="M504 715A36 11 0 0 0 576 715"/><path d="M504 612V715M576 612V715" stroke-width="3.5"/><ellipse cx="540" cy="602" rx="45" ry="18" fill="#fff"/><path d="M495 602C495 626 504 624 504 628M585 602C585 626 576 624 576 628"/><ellipse cx="540" cy="601" rx="25" ry="9"/><ellipse cx="540" cy="603" rx="14" ry="5" stroke-width="3"/>
<path d="M619 562A36 11 0 0 0 691 562"/><path d="M619 575A36 11 0 0 0 691 575"/><path d="M619 589A36 11 0 0 0 691 589"/><path d="M619 602A36 11 0 0 0 691 602"/><path d="M619 615A36 11 0 0 0 691 615"/><path d="M619 628A36 11 0 0 0 691 628"/><path d="M619 642A36 11 0 0 0 691 642"/><path d="M619 655A36 11 0 0 0 691 655"/><path d="M619 554V655M691 554V655" stroke-width="3.5"/><ellipse cx="655" cy="544" rx="45" ry="18" fill="#fff"/><path d="M610 544C610 568 619 566 619 570M700 544C700 568 691 566 691 570"/><ellipse cx="655" cy="543" rx="25" ry="9"/><ellipse cx="655" cy="545" rx="14" ry="5" stroke-width="3"/>
<path d="M200 880C230 895 280 895 300 870M318 815C340 830 400 828 415 800M495 720C520 735 570 735 590 710M605 660C630 675 690 672 705 640"/>
<path d="M655 215L630 385C640 415 700 420 716 388L745 215" fill="#fff"/><ellipse cx="700" cy="210" rx="45" ry="28" fill="#fff"/>
<path d="M650 252C670 270 720 272 742 258M636 345C655 362 700 365 722 352M640 262C628 285 628 320 636 342M745 262L806 268M735 322L806 336"/>
</g>
<g transform="translate(1465,437) scale(0.1675)">
<path d="M0 268C60 262 120 280 180 276C240 285 290 290 318 274M0 336C50 345 100 345 150 350M420 322C450 318 480 300 498 305C505 325 502 350 495 370C470 378 440 372 420 376"/>
<path d="M180 276C220 240 260 215 300 200C370 180 440 160 490 130C520 150 550 190 560 222C530 250 500 285 470 305C450 320 430 328 415 330M490 130C530 100 570 75 612 50M560 222C620 215 680 195 735 175M545 85L600 102M640 165L655 200M215 300C250 295 290 290 318 274"/>
<path d="M150 350C150 370 160 385 178 386C195 385 205 372 212 362M212 362C225 380 260 390 290 385M290 385C300 395 330 400 350 395C380 392 405 385 415 370C420 360 415 350 405 345"/>
<ellipse cx="233" cy="333" rx="26" ry="24"/><ellipse cx="312" cy="360" rx="24" ry="20" transform="rotate(-30 312 360)"/><ellipse cx="355" cy="365" rx="30" ry="20" transform="rotate(-30 355 365)"/><ellipse cx="395" cy="360" rx="22" ry="14" transform="rotate(-20 395 360)"/>
<path d="M0 545C40 565 100 590 140 615C155 625 162 640 160 700C140 730 110 765 80 790L0 862M178 712L0 905M172 745L0 945M60 680L130 645M110 760L150 700"/>
<path d="M-30 600V600C-30 622 46 622 46 600V600" fill="#fff"/><ellipse cx="8" cy="600" rx="38" ry="22" fill="#fff"/><path d="M-15 695V725C-15 747 65 747 65 725V695" fill="#fff"/><ellipse cx="25" cy="695" rx="40" ry="22" fill="#fff"/>
</g>
<g stroke="#111" stroke-width="6">
<g transform="translate(1340,437) scale(0.1675)">
<path d="M385 340L630 528"/><path d="M648 542L620 501L600 527Z" fill="#111" stroke-width="2"/><circle cx="332" cy="297" r="65" fill="#fff"/>
</g><g transform="translate(1465,437) scale(0.1675)">
<path d="M295 608L68 338"/><path d="M53 320L72 369L98 348Z" fill="#111" stroke-width="2"/><circle cx="337" cy="657" r="65" fill="#fff"/>
</g></g>
<g fill="#111" stroke="none" font-family="Liberation Sans, sans-serif" font-size="52" text-anchor="middle">
<g transform="translate(1340,437) scale(0.1675)"><text x="332" y="315">1</text></g><g transform="translate(1465,437) scale(0.1675)"><text x="337" y="675">2</text></g></g>
</g></svg>
<div class="cap" style="left:1534px;top:608px;font-size:5.2px;transform-origin:0 0;transform:scaleX(1.046)">NHIL14ENG0222AA</div>
<div class="cap" style="left:1595.2px;top:608.4px;font-size:6.8px;color:#000">2</div>
</body>
</html>
